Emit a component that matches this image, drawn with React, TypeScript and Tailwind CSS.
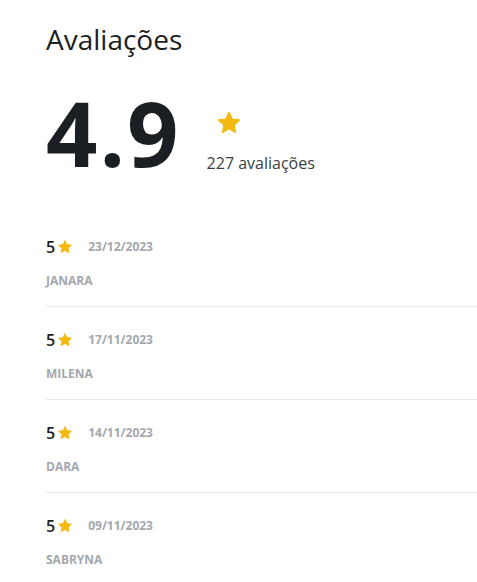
const reviews = [
  { score: 5, date: "23/12/2023", name: "JANARA" },
  { score: 5, date: "17/11/2023", name: "MILENA" },
  { score: 5, date: "14/11/2023", name: "DARA" },
  { score: 5, date: "09/11/2023", name: "SABRYNA" },
];

function Star({ className }: { className: string }) {
  return (
    <svg viewBox="0 0 24 24" className={className} fill="currentColor">
      <path d="M12 2.2l2.9 6.2 6.8.8-5 4.7 1.3 6.7L12 17.3l-6 3.3 1.3-6.7-5-4.7 6.8-.8z" strokeLinejoin="round" stroke="currentColor" strokeWidth="1.2" />
    </svg>
  );
}

export default function App() {
  return (
    <div className="min-h-screen bg-white pl-[46px] pt-[21px] text-[#1b1e22]" style={{ fontFamily: '"Open Sans", "Noto Sans", sans-serif' }}>
      <h1 className="text-[28px] leading-[36px] font-medium">Avaliações</h1>
      <div className="mt-[30px] flex items-start h-[90px]">
        <div className="text-[90px] leading-[90px] font-bold tracking-[2px]">4.9</div>
        <div className="ml-[26px] mt-[23px] flex flex-col">
          <Star className="ml-[9px] h-[26px] w-[26px] text-[#f2b90f]" />
          <div className="mt-[15px] text-[16px] leading-[24px] text-[#3a3e44]">227 avaliações</div>
        </div>
      </div>
      <div className="mt-[37px]">
        {reviews.map((r, i) => (
          <div key={r.name} className={`pt-[23px] pb-[15px] ${i < reviews.length - 1 ? "border-b border-[#e6e8ec]" : ""}`}>
            <div className="flex items-center h-[20px]">
              <span className="text-[16px] font-semibold leading-none">{r.score}</span>
              <Star className="ml-[2px] h-[16px] w-[16px] text-[#f2b90f]" />
              <span className="ml-[15px] text-[12px] font-bold text-[#a3a7ae]">{r.date}</span>
            </div>
            <div className="mt-[14px] h-[20px] flex items-center text-[12px] font-bold text-[#a3a7ae]">{r.name}</div>
          </div>
        ))}
      </div>
    </div>
  );
}
